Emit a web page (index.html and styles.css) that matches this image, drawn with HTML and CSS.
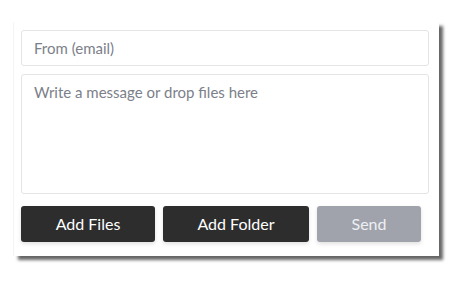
FILE: index.html
```html
<!DOCTYPE html>
<html>
<head>
<meta charset="utf-8">
<link rel="stylesheet" href="styles.css">
</head>
<body>
<div class="card">
  <input class="field" type="text" placeholder="From (email)">
  <textarea class="field message" placeholder="Write a message or drop files here"></textarea>
  <div class="actions">
    <button class="btn dark files">Add Files</button>
    <button class="btn dark folder">Add Folder</button>
    <button class="btn send">Send</button>
  </div>
</div>
</body>
</html>
```
FILE: styles.css
```css
html, body {
  margin: 0;
  padding: 0;
  background: #ffffff;
}
body {
  padding: 22px 0 20px 14px;
  font-family: Lato, "Liberation Sans", sans-serif;
}
.card {
  box-sizing: border-box;
  width: 425px;
  height: 234px;
  padding: 8px 10px 0 7px;
  background: #ffffff;
  box-shadow: -1px 0 0 rgba(0,0,0,0.04), 4px 4px 3px rgba(0,0,0,0.6);
  display: flex;
  flex-direction: column;
}
.field {
  box-sizing: border-box;
  width: 408px;
  border: 1px solid #e4e4e6;
  border-radius: 3px;
  background: #fff;
  font-family: Lato, "Liberation Sans", sans-serif;
  font-size: 15px;
  color: #333;
  padding: 0 12px;
  margin: 0;
  outline: none;
}
.field::placeholder {
  color: #7c808a;
  opacity: 1;
}
input.field {
  height: 36px;
  padding-bottom: 1px;
}
.message {
  height: 120px;
  margin-top: 8px;
  padding-top: 7px;
  resize: none;
  display: block;
  line-height: 20px;
}
.actions {
  display: flex;
  gap: 8px;
  margin-top: 12px;
}
.btn {
  height: 36px;
  border: none;
  border-radius: 3px;
  font-family: Lato, "Liberation Sans", sans-serif;
  font-size: 16px;
  color: #ffffff;
  padding: 0 0 1px;
  box-shadow: 0 2px 4px rgba(0,0,0,0.12);
}
.dark {
  background: #2d2d2d;
}
.files { width: 134px; }
.folder { width: 146px; }
.send {
  width: 104px;
  background: #a0a3ac;
  color: #eef0f3;
}
```
